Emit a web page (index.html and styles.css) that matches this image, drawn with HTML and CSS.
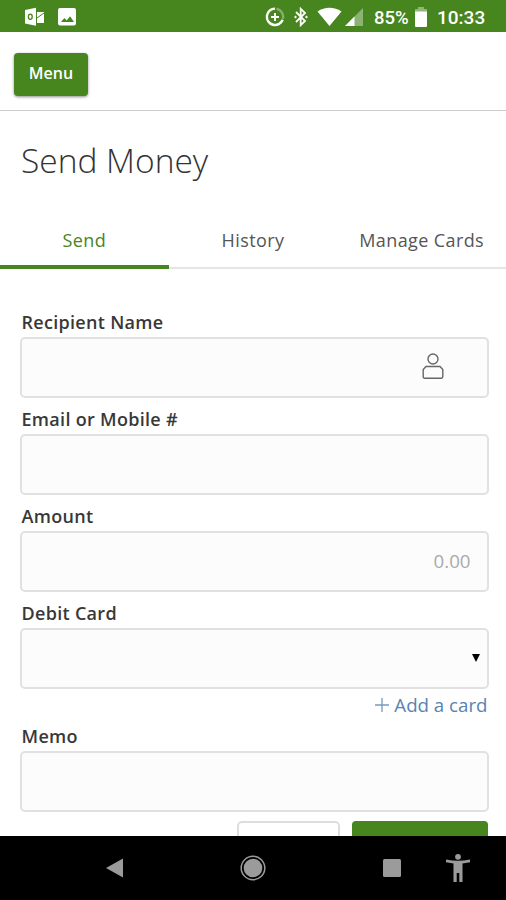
FILE: index.html
```html
<!DOCTYPE html>
<html lang="en">
<head>
<meta charset="utf-8">
<meta name="viewport" content="width=device-width, initial-scale=1">
<title>Send Money</title>
<link rel="stylesheet" href="styles.css">
</head>
<body>
<div class="screen">
  <div class="status">
    <svg class="notices" width="54" height="20" viewBox="0 0 54 20">
      <path fill="#fff" d="M1 3l11-2.3v18L1 16.5z"/>
      <path fill="#fff" d="M13 5h7v11h-7z"/>
      <path fill="none" stroke="#47851f" stroke-width="1" d="M13 11l7-5"/>
      <ellipse cx="6.3" cy="9.8" rx="1.9" ry="2.6" fill="none" stroke="#47851f" stroke-width="1.3"/>
      <rect x="34" y="1" width="18" height="17.5" rx="2" fill="#fff"/>
      <path fill="#47851f" d="M37 15l3.4-4 2.3 2.5 3.4-4.2L50 15z"/>
    </svg>
    <svg class="saver" width="20" height="20" viewBox="0 0 20 20" fill="none" stroke="#fff">
      <path stroke-width="2.4" d="M10 1.6a8.2 8.2 0 1 0 7.7 11.2"/>
      <path stroke-width="2.4" opacity=".35" d="M11.5 1.8a8.2 8.2 0 0 1 6.4 10"/>
      <path stroke-width="2" d="M10 6v8M6 10h8"/>
    </svg>
    <svg class="bluetooth" width="14" height="20" viewBox="0 0 14 20" fill="none" stroke="#fff" stroke-width="1.8">
      <path d="M2 5l9 9-4.3 4.2V1.8L11 6l-9 9"/>
      <path stroke="none" fill="#fff" d="M0 10l1.5-1.5L3 10l-1.500 1.500zM11 10l1.500-1.500L14 10l-1.500 1.500z"/>
    </svg>
    <svg class="wifi" width="25" height="20" viewBox="0 0 25 20"><path fill="#fff" d="M12.500 19L.5 4.500Q6 .8 12.500.8t12 3.700z"/></svg>
    <svg class="signal" width="18" height="18" viewBox="0 0 18 18"><path fill="#fff" opacity=".38" d="M18 0v18H0z"/><path fill="#fff" d="M9.500 8.500V18H0z"/></svg>
    <span class="percent">85%</span>
    <svg class="battery" width="12" height="20" viewBox="0 0 12 20"><path fill="#fff" opacity=".4" d="M0 2h3V0h6v2h3v3H0z"/><path fill="#fff" d="M0 4.500h12V19q0 1-1 1H1q-1 0-1-1z"/></svg>
    <span class="clock">10:33</span>
  </div>
  <header class="header"><button class="menu">Menu</button></header>
  <main class="main">
    <h1 class="title">Send Money</h1>
    <nav class="tabs">
      <a class="tab active">Send</a>
      <a class="tab">History</a>
      <a class="tab">Manage Cards</a>
    </nav>
    <form class="form">
      <label class="label">Recipient Name</label>
      <div class="field recipient">
        <svg width="22" height="27" viewBox="0 0 22 27" fill="none" stroke="#666" stroke-width="1.400"><circle cx="11" cy="6" r="5"/><path d="M4 13.500h14l2.800 3v7q0 1.700-1.500 1.700H2.700q-1.500 0-1.500-1.700v-7z"/></svg>
      </div>
      <label class="label">Email or Mobile #</label>
      <div class="field"></div>
      <label class="label">Amount</label>
      <div class="field amount">0.00</div>
      <label class="label">Debit Card</label>
      <div class="field select"><svg width="8" height="8" viewBox="0 0 8 8"><path d="M0 0h8L4 8z"/></svg></div>
      <a class="add"><svg width="14" height="14" viewBox="0 0 14 14"><path stroke="#7899be" stroke-width="1.300" d="M7 0v14M0 7h14"/></svg><span>Add a card</span></a>
      <label class="label">Memo</label>
      <div class="field"></div>
      <div class="actions"><div class="cancel"></div><div class="submit"></div></div>
    </form>
  </main>
  <div class="navbar">
    <svg class="back" width="18" height="20" viewBox="0 0 18 20"><path fill="#9b9b9b" d="M17 .5v19L0 10z"/></svg>
    <svg class="home" width="26" height="26" viewBox="0 0 26 26"><circle cx="13" cy="13" r="11.800" fill="none" stroke="#9b9b9b" stroke-width="1.500"/><circle cx="13" cy="13" r="9.300" fill="#9b9b9b"/></svg>
    <svg class="recent" width="18" height="18" viewBox="0 0 18 18"><rect width="18" height="18" rx="1.500" fill="#9b9b9b"/></svg>
    <svg class="access" width="26" height="30" viewBox="0 0 26 30" fill="#9b9b9b"><circle cx="13" cy="3.800" r="2.900"/><path d="M1 6.500q12 2.500 24 0v2.800l-7.500 1.200V29h-3.200v-9h-2.600v9H8.500V10.500L1 9.300z"/></svg>
  </div>
</div>
</body>
</html>
```
FILE: styles.css
```css
* { box-sizing: border-box; }
body { margin: 0; background: #fff; font-family: "Open Sans", sans-serif; }
svg { display: block; flex: none; }
.screen { width: 506px; height: 900px; overflow: hidden; display: flex; flex-direction: column; }
.status { height: 32px; flex: none; background: #47851f; display: flex; align-items: center; padding: 1px 0 0 24px; color: #fff; font: 500 19px/32px Roboto, sans-serif; }
.saver { margin-left: 187px; }
.bluetooth { margin-left: 9px; }
.wifi { margin-left: 9px; }
.signal { margin-left: 3px; }
.percent { width: 35px; margin-left: 11px; white-space: nowrap; padding-top: 2px; font-size: 18.500px; }
.battery { margin-left: 6px; }
.clock { margin-left: 10px; padding-top: 2px; font-size: 19px; }
.header { height: 79px; flex: none; border-bottom: 1px solid #ccc; padding: 21px 14px; }
.menu { display: block; width: 74px; height: 43px; border: 0; border-radius: 4px; padding: 0 0 3px; background: #47851f; color: #fff; font: 600 16px/22px "Open Sans", sans-serif; box-shadow: 0 1px 3px rgba(0,0,0,.45); }
.main { height: 725px; flex: none; overflow: hidden; }
.title { margin: 0; padding: 25px 21px 0; height: 101px; font-size: 33.500px; line-height: 48px; font-weight: 300; color: #333; white-space: nowrap; }
.tabs { display: grid; grid-template-columns: repeat(3, 1fr); height: 57px; }
.tab { padding-top: 4px; text-align: center; font-size: 18px; line-height: 48px; letter-spacing: .4px; color: #555; border-bottom: 2px solid #e5e5e5; white-space: nowrap; }
.active { color: #47851f; border-bottom: 4px solid #47851f; }
.form { padding: 39px 17.500px 0 20px; display: flex; flex-direction: column; }
.label { height: 29px; line-height: 29px; font-size: 18px; font-weight: 600; color: #383838; white-space: nowrap; letter-spacing: .3px; padding-left: 1.500px; }
.field { height: 61px; border: 2px solid #e1e1e1; border-radius: 5px; background: #fcfcfc; display: flex; align-items: center; justify-content: flex-end; margin-bottom: 7px; }
.recipient { padding: 0 43px 3px 0; }
.amount { padding: 0 16px 2px 0; font-size: 18.700px; color: #aaa; }
.select { padding: 0 7px 2px 0; margin-bottom: 0; }
.add { height: 33px; padding: 0 1px 2px 0; display: flex; justify-content: flex-end; align-items: center; gap: 5px; color: #5983b3; font-size: 18.700px; }
.actions { display: flex; justify-content: flex-end; gap: 12px; padding: 2px 1px 0 0; }
.cancel { width: 103px; height: 50px; border: 2px solid #ddd; border-radius: 5px; }
.submit { width: 136px; height: 50px; border-radius: 4px; background: #47851f; }
.navbar { height: 64px; flex: none; background: #000; display: flex; align-items: center; padding-left: 106px; }
.home { margin-left: 116px; }
.recent { margin-left: 117px; }
.access { margin-left: 44px; }
```
